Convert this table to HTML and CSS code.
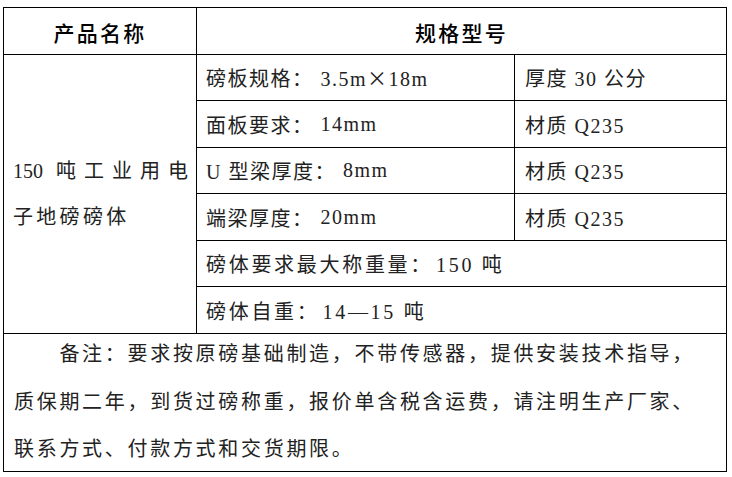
FILE: index.html
```html
<!DOCTYPE html>
<html lang="zh-CN">
<head>
<meta charset="utf-8">
<title>规格型号</title>
<link rel="stylesheet" href="styles.css">
</head>
<body>
<div class="sheet">
  <div class="cell head">产品名称</div>
  <div class="cell head wide">规格型号</div>
  <div class="cell name">
    <div class="name-text">
      <span class="line first">150 吨工业用电</span>
      <span class="line">子地磅磅体</span>
    </div>
  </div>
  <div class="cell">磅板规格：<span class="lat">3.5m<span class="cjk">×</span>18m</span></div>
  <div class="cell right">厚度 30 公分</div>
  <div class="cell">面板要求：<span class="lat">14mm</span></div>
  <div class="cell right">材质 Q235</div>
  <div class="cell">U 型梁厚度：<span class="lat">8mm</span></div>
  <div class="cell right">材质 Q235</div>
  <div class="cell">端梁厚度：<span class="lat">20mm</span></div>
  <div class="cell right">材质 Q235</div>
  <div class="cell wide loose">磅体要求最大称重量：<span class="lat small-gap">150 吨</span></div>
  <div class="cell wide loose">磅体自重：<span class="lat small-gap">14—15 吨</span></div>
  <div class="cell remark">
    <p class="remark-text">备注：要求按原磅基础制造，不带传感器，提供安装技术指导，质保期二年，到货过磅称重，报价单含税含运费，请注明生产厂家、联系方式、付款方式和交货期限。</p>
  </div>
</div>
</body>
</html>
```

FILE: styles.css
```css
html, body {
  margin: 0;
  background: #fff;
}

body {
  padding: 7px 0 0 3px;
}

.sheet {
  display: grid;
  width: fit-content;
  grid-template-columns: 192px 317px 211px;
  grid-template-rows: 46px 45px 46px 45px 46px 45px 46px 137px;
  gap: 1px;
  padding: 1px;
  background: #000;
}

.cell {
  background: #fff;
  display: flex;
  align-items: center;
  padding: 0 8px 0 9px;
  font-family: "Liberation Serif", "Noto Sans CJK SC", serif;
  font-size: 20px;
  letter-spacing: 1.5px;
  color: #222;
  white-space: nowrap;
}

.cell.right {
  padding-left: 10px;
}

.cell.wide {
  grid-column: 2 / 4;
}

.cell.loose {
  letter-spacing: 2.7px;
}

.head {
  justify-content: center;
  font-family: "Noto Sans CJK SC", sans-serif;
  font-size: 21px;
  font-weight: 500;
  letter-spacing: 2.3px;
  padding: 2px 0 0 0;
  color: #000;
}

.cjk {
  font-family: "Noto Sans CJK SC", sans-serif;
}

.lat {
  margin-left: 7px;
}

.lat.small-gap {
  margin-left: 3px;
}

.name {
  grid-column: 1;
  grid-row: 2 / 8;
  white-space: normal;
  padding: 0 8px 0 9px;
}

.name-text {
  width: 100%;
  line-height: 46px;
  letter-spacing: 3.3px;
}

.line {
  display: block;
  white-space: nowrap;
}

.line.first {
  text-align: justify;
  text-align-last: justify;
  letter-spacing: 0;
}

.remark {
  grid-column: 1 / 4;
  white-space: normal;
  padding: 0 20px 0 10px;
}

.remark-text {
  width: 100%;
  margin: 0;
  line-height: 47.5px;
  letter-spacing: 2.7px;
  text-indent: 45.4px;
}
```
